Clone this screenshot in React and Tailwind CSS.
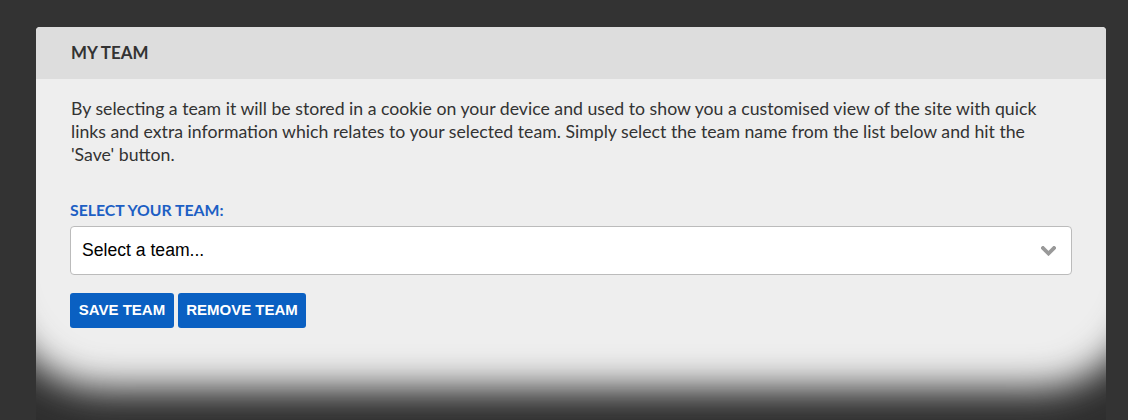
import React from 'react';

const Chevron = () => (
  <svg width="15" height="10" viewBox="0 0 15 10" className="shrink-0">
    <polyline
      points="2,2 7.5,7.5 13,2"
      fill="none"
      stroke="#999999"
      strokeWidth="3.8"
      strokeLinecap="square"
    />
  </svg>
);

export default function App() {
  return (
    <div className="h-[420px] w-full overflow-hidden bg-[#333333] pl-[36px] pr-[22px] pt-[27px]">
      <div className="relative h-[393px] overflow-hidden rounded-t-[4px] bg-[#eeeeee] font-['Lato',sans-serif]">
        {/* Header */}
        <div className="flex h-[52px] items-center bg-[#dddddd] px-[35px]">
          <h2 className="text-[16.9px] font-bold leading-[20px] text-[#333333]">MY TEAM</h2>
        </div>

        {/* Body */}
        <div className="px-[34px] pt-[18px]">
          <p className="whitespace-nowrap pl-[1px] text-[17.7px] leading-[23px] text-[#333333]">
            By selecting a team it will be stored in a cookie on your device and used to show you a customised view of the site with quick
            <br />
            links and extra information which relates to your selected team. Simply select the team name from the list below and hit the
            <br />
            'Save' button.
          </p>

          <label className="mt-[35px] block text-[15.8px] font-bold leading-[18px] text-[#1d5fc4]">
            SELECT YOUR TEAM:
          </label>

          <div className="mt-[7px] flex h-[49px] items-center justify-between rounded-[4px] border border-[#bbbbbb] bg-white pl-[11px] pr-[15px]">
            <span className="font-['Liberation_Sans',Arial,sans-serif] text-[17.6px] text-black">Select a team...</span>
            <Chevron />
          </div>

          <div className="mt-[18px] flex gap-[4px] font-['Liberation_Sans',Arial,sans-serif]">
            <button className="flex h-[35px] w-[104px] items-center justify-center rounded-[3px] bg-[#0a60c2] text-[15px] font-bold text-white">
              SAVE TEAM
            </button>
            <button className="flex h-[35px] w-[128px] items-center justify-center rounded-[3px] bg-[#0a60c2] text-[15px] font-bold text-white">
              REMOVE TEAM
            </button>
          </div>
        </div>

        {/* Bottom fade overlay */}
        <div className="pointer-events-none absolute inset-0 overflow-hidden">
          <div className="absolute -left-[40px] -right-[40px] -top-[200px] bottom-[32px] rounded-b-[110px] shadow-[0_0_0_300px_#2e2e2e] blur-[18px]" />
        </div>
      </div>
    </div>
  );
}
